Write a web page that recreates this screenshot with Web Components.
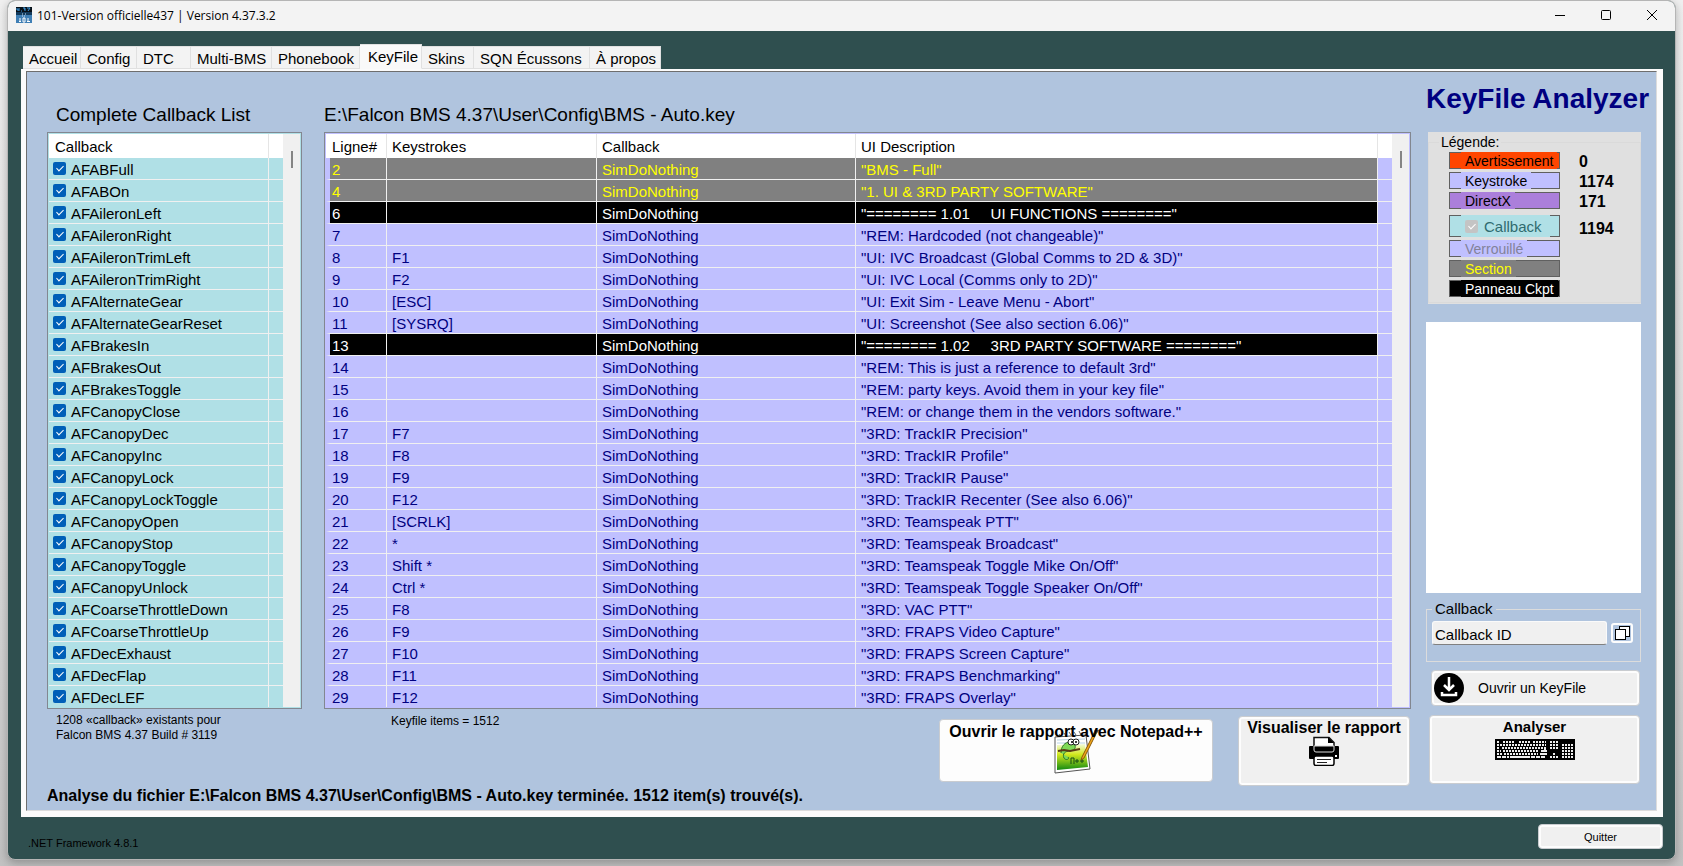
<!DOCTYPE html>
<html lang="fr">
<head>
<meta charset="utf-8">
<title>101-Version officielle437 | Version 4.37.3.2</title>
<style>
html { height: 100%; background: linear-gradient(#f0f0f0, #dcdcdc 60%, #c2c2c2); }
body { margin: 0; min-height: 100%; font-family: "Liberation Sans", Arial, sans-serif; font-size: 15px; color: #000; }
</style>
</head>
<body>
<app-window></app-window>

<script>
const define = (name, html, setup) => {
  const template = document.createElement('template');
  template.innerHTML = `<style>:host,*{box-sizing:border-box}</style>${html}`;
  customElements.define(name, class extends HTMLElement {
    constructor() {
      super();
      this.attachShadow({ mode: 'open' }).append(template.content.cloneNode(true));
    }
    connectedCallback() {
      if (setup && !this.ready) { this.ready = true; setup(this, this.shadowRoot); }
    }
  });
};

const checkCss = `
input[type=checkbox]{appearance:none;margin:0;width:13px;height:13px;flex:none;border-radius:2px;background:var(--check,#005fb8);display:grid;place-items:start center}
input[type=checkbox]::after{content:"";width:3px;height:6px;margin-top:2px;border:solid #fff;border-width:0 1px 1px 0;transform:rotate(45deg)}`;

/* Title bar */
define('title-bar', `
<style>
:host{display:flex;align-items:center;height:30px;background:#f3f3f3;padding:0 0 2px 8px;font:12px "Open Sans","Noto Sans",sans-serif}
.logo{margin-right:5px}
span{flex:1}
button{width:46px;height:28px;border:0;padding:0;background:none;display:grid;place-items:center}
</style>
<svg class="logo" width="16" height="16" viewBox="0 0 16 16">
 <rect width="16" height="16" fill="#123a5c"/><rect width="16" height="5" fill="#071018"/><rect y="8" width="16" height="8" fill="#3f7fb5"/>
 <path d="M1 1v2h2M3 1v3M5 4h1M7 1h2v3M8 2h1M11 1h3l-2 3" stroke="#3d9be0" fill="none"/>
 <path d="M6 7h1M9 7h1M8 9h1M6 9h1" stroke="#cfe4f5"/>
 <path d="M4 11v4M3 14.500h2M7 11h2v4H7zM12 11v4M11 14.500h3" stroke="#fff" fill="none"/>
</svg>
<span><slot></slot></span>
<button aria-label="Réduire"><svg width="10" height="10"><path d="M0 5.500h10" stroke="#000"/></svg></button>
<button aria-label="Agrandir"><svg width="10" height="10"><rect x=".5" y=".5" width="9" height="9" rx="1" fill="none" stroke="#000"/></svg></button>
<button aria-label="Fermer"><svg width="10" height="10"><path d="M0 0l10 10M10 0L0 10" stroke="#000"/></svg></button>
`);

/* Tabs */
define('tab-strip', `
<style>
:host{display:block}
nav{display:flex;align-items:flex-end;padding-left:2px;height:25px}
a{height:23px;padding:0 6px;line-height:23px;background:#f3f3f3;border:1px solid #e0e0e0;border-width:1px 1px 1px 0;color:#000;text-decoration:none;white-space:nowrap}
a[aria-current]{height:25px;background:#f9f9f9;border-bottom-color:#f9f9f9;padding-left:8px}
</style>
<nav></nav>`, (host, root) => {
  const tabs = [['Accueil', 58], ['Config', 56], ['DTC', 54], ['Multi-BMS', 81], ['Phonebook', 88], ['KeyFile', 62], ['Skins', 52], ['SQN Écussons', 116], ['À propos', 71]];
  root.querySelector('nav').innerHTML = tabs.map(([t, w]) =>
    `<a href="#" style="width:${w}px"${t === 'KeyFile' ? ' aria-current="page"' : ''}>${t}</a>`).join('');
});

/* Scrolling frame shared by both tables */
define('list-frame', `
<style>
:host{display:flex;border:1px solid #828790;padding:0}
.in{flex:1;display:flex;min-width:0;border:1px solid var(--row)}
.body{flex:1;min-width:0}
.bar{width:17px;background:#f0f0f0;padding:17px 0 0 8px}
.bar i{display:block;width:2px;height:17px;background:#858585}
</style>
<div class="in"><div class="body"><slot></slot></div><div class="bar"><i></i></div></div>`);

const tableCss = `
:host{display:block}
table{width:100%;table-layout:fixed;border-collapse:separate;border-spacing:0;font-size:15px}
th{height:24px;padding:2px 5px 0;background:#fff;font-weight:normal;text-align:left;border-right:1px solid #e5e5e5;line-height:20px}
th:first-child{padding-left:6px}
th:last-child{border:0}
td{height:22px;padding:2px 4px 0;line-height:19px;background:var(--row);border:solid #f0f0f0;border-width:0 1px 1px 0;white-space:pre;overflow:hidden}
td:last-child{border-right:0}
tr:last-child td{height:21px;border-bottom:0}`;

/* Left list */
define('callback-list', `
<style>${tableCss}${checkCss}
:host{--row:#b0e0e6}
td{padding:0 4px}
label{display:flex;gap:5px;align-items:center;height:20px}
label span{padding-top:2px;line-height:18px}
</style>
<list-frame><table><colgroup><col><col style="width:14px"></colgroup>
<thead><tr><th>Callback</th><th></th></tr></thead><tbody></tbody></table></list-frame>`, (host, root) => {
  const names = 'AFABFull AFABOn AFAileronLeft AFAileronRight AFAileronTrimLeft AFAileronTrimRight AFAlternateGear AFAlternateGearReset AFBrakesIn AFBrakesOut AFBrakesToggle AFCanopyClose AFCanopyDec AFCanopyInc AFCanopyLock AFCanopyLockToggle AFCanopyOpen AFCanopyStop AFCanopyToggle AFCanopyUnlock AFCoarseThrottleDown AFCoarseThrottleUp AFDecExhaust AFDecFlap AFDecLEF'.split(' ');
  root.querySelector('tbody').innerHTML = names.map(n =>
    `<tr><td><label><input type="checkbox" checked><span>${n}</span></label></td><td></td></tr>`).join('');
});

/* Key file table */
define('key-table', `
<style>${tableCss}
:host{--row:#c0c0ff;color:#000080}
th{color:#000}
td:first-child{border-left:4px solid #c0c0ff;padding-left:2px}
td:nth-child(2),td:nth-child(3),td:nth-child(4){padding-left:5px}
.section td:not(:last-child){background:#808080;color:#ff0}
.panel td:not(:last-child){background:#000;color:#fff}
</style>
<list-frame><table><colgroup><col style="width:61px"><col style="width:210px"><col style="width:259px"><col><col style="width:14px"></colgroup>
<thead><tr><th>Ligne#</th><th>Keystrokes</th><th>Callback</th><th>UI Description</th><th></th></tr></thead><tbody></tbody></table></list-frame>`, (host, root) => {
  const rows = [
    [2, '', 'BMS - Full', 'section'],
    [4, '', '1. UI & 3RD PARTY SOFTWARE', 'section'],
    [6, '', '======== 1.01     UI FUNCTIONS ========', 'panel'],
    [7, '', 'REM: Hardcoded (not changeable)'],
    [8, 'F1', 'UI: IVC Broadcast (Global Comms to 2D & 3D)'],
    [9, 'F2', 'UI: IVC Local (Comms only to 2D)'],
    [10, '[ESC]', 'UI: Exit Sim - Leave Menu - Abort'],
    [11, '[SYSRQ]', 'UI: Screenshot (See also section 6.06)'],
    [13, '', '======== 1.02     3RD PARTY SOFTWARE ========', 'panel'],
    [14, '', 'REM: This is just a reference to default 3rd'],
    [15, '', 'REM: party keys. Avoid them in your key file'],
    [16, '', 'REM: or change them in the vendors software.'],
    [17, 'F7', '3RD: TrackIR Precision'],
    [18, 'F8', '3RD: TrackIR Profile'],
    [19, 'F9', '3RD: TrackIR Pause'],
    [20, 'F12', '3RD: TrackIR Recenter (See also 6.06)'],
    [21, '[SCRLK]', '3RD: Teamspeak PTT'],
    [22, '*', '3RD: Teamspeak Broadcast'],
    [23, 'Shift *', '3RD: Teamspeak Toggle Mike On/Off'],
    [24, 'Ctrl *', '3RD: Teamspeak Toggle Speaker On/Off'],
    [25, 'F8', '3RD: VAC PTT'],
    [26, 'F9', '3RD: FRAPS Video Capture'],
    [27, 'F10', '3RD: FRAPS Screen Capture'],
    [28, 'F11', '3RD: FRAPS Benchmarking'],
    [29, 'F12', '3RD: FRAPS Overlay'],
  ];
  root.querySelector('tbody').innerHTML = rows.map(([n, k, d, c]) =>
    `<tr class="${c || ''}"><td>${n}</td><td>${k}</td><td>SimDoNothing</td><td>"${d.replace('&', '&amp;')}"</td><td></td></tr>`).join('');
});

/* Legend */
define('key-legend', `
<style>${checkCss}
:host{display:block;background:#e0e0e0;font-size:14px;padding-bottom:1px}
fieldset{margin:0;border:1px solid #dadada;padding:0 0 5px 20px;min-width:0}
legend{margin-left:-10px;padding:2px 2px 0;line-height:16px;height:20px}
dl{margin:0;display:grid;grid-template-columns:111px 1fr;column-gap:19px;row-gap:3px}
dt{height:17px;border:1px solid #606060;background:var(--c);color:var(--t,#000);padding-left:11px}
dt>span,dt>label{display:inline-flex;align-items:center;height:17px;margin-top:-1px;padding:1px 4px 0;background:var(--c);white-space:nowrap;vertical-align:top}
dd{margin:0;font-weight:bold;font-size:16px;line-height:19px;height:17px}
.big{height:22px;margin-top:3px;font-size:15px}
.big>label{height:22px;padding:0 8px 0 4px;gap:6px}
dd.big{font-size:16px;line-height:28px}
.big input{--check:#c4c4c4}
</style>
<fieldset><legend>Légende:</legend>
<dl>
<dt style="--c:#ff4500"><span>Avertissement</span></dt><dd>0</dd>
<dt style="--c:#c0c0ff"><span>Keystroke</span></dt><dd>1174</dd>
<dt style="--c:#ab7fdb"><span>DirectX</span></dt><dd>171</dd>
<dt class="big" style="--c:#b0e0e6;--t:#2f6b6f"><label><input type="checkbox" checked disabled>Callback</label></dt><dd class="big">1194</dd>
<dt style="--c:#c0c0ff;--t:#82829a"><span>Verrouillé</span></dt><dd></dd>
<dt style="--c:#808080;--t:#ff0"><span>Section</span></dt><dd></dd>
<dt style="--c:#000;--t:#fff"><span>Panneau Ckpt</span></dt><dd></dd>
</dl></fieldset>`);

/* Push button: caption with an optional picture */
define('push-button', `
<style>
:host{display:block}
button{width:100%;height:100%;display:flex;flex-direction:var(--dir,column);align-items:center;justify-content:var(--just,flex-start);gap:var(--gap,0);padding:var(--pad,3px 0 0);font:inherit;line-height:16px;color:#000;white-space:nowrap;background:var(--face,#f0f0f0);border:1px solid #c9ccd0;border-radius:4px;box-shadow:inset 0 0 0 2px #fdfdfd}
</style>
<button><slot></slot></button>`);

/* Callback ID box */
define('callback-box', `
<style>
:host{display:block}
fieldset{margin:0;min-width:0;border:1px solid #dcdcdc;padding:4px 7px 16px 5px;display:flex}
legend{padding:0 3px;line-height:16px;margin-left:0}
.row{display:flex;gap:4px;align-items:center;width:100%}
input{flex:1;min-width:0;height:24px;padding:2px 2px 0;font:inherit;background:#f0f0f0;border:1px solid #fafafa;border-bottom:1px solid #808080;border-radius:3px}
button{width:22px;height:20px;padding:0;background:#b0c4de;border:2px solid #fdfdfd;border-radius:3px;display:grid;place-items:center}
</style>
<fieldset><legend><label for="id">Callback</label></legend>
<div class="row"><input id="id" value="Callback ID">
<button aria-label="Copier"><svg width="15" height="14" viewBox="0 0 15 14"><rect x="4.500" y=".5" width="10" height="10" fill="#fff" stroke="#000"/><rect x=".5" y="3.500" width="10" height="10" fill="#fff" stroke="#000"/></svg></button></div>
</fieldset>`);

/* KeyFile page */
define('keyfile-page', `
<style>
:host{display:flex;background:#b0c4de;border:solid #fbfbfb;border-width:2px 6px 6px 5px;flex:1}
.page{flex:1;min-width:0;border-left:1px solid #6e6e6e;border-top:1px solid #6e6e6e;border-right:1px solid #dcdcdc;border-bottom:1px solid #dcdcdc;padding:1px 15px 0 20px;display:flex;flex-direction:column}
.cols{display:grid;grid-template-columns:255px minmax(0,1fr) 215px;column-gap:0;flex:1}
.mid{margin:0 15px 0 22px}
h2{margin:0;padding:30px 0 5px;font-weight:normal;font-size:19px;line-height:24px;white-space:nowrap}
.left h2{padding-left:9px}
.note{font-size:12px;line-height:15px;margin:0}
.left .note{padding:4px 9px 0}
.under{display:flex;align-items:flex-start;padding:7px 1px 0 0}
.under .note{flex:1;padding-left:67px;margin-top:-2px}
push-button{font-weight:bold}
.np{width:274px;height:63px;margin:3px 25px 0 0;--face:#fdfdfd;--pad:0;font-size:16px}
.stack{display:grid;justify-items:center;width:100%}
.stack>*{grid-area:1/1}
.stack span{padding-top:4px}
.stack svg{margin-top:8px}
.view{width:172px;height:70px;font-size:16px}
.right{display:flex;flex-direction:column;padding-bottom:2px}
h1{margin:0;padding:10px 0 17px;font-size:28px;line-height:32px;color:#000080;white-space:nowrap}
key-legend{margin-left:2px}
textarea{flex:1;min-height:100px;margin:18px 0 8px;border:0;background:#fff;resize:none;width:100%}
.open{margin:8px 1px 9px 5px;height:36px;font-weight:normal;font-size:14px;--dir:row;--gap:14px;--pad:0 2px}
.run{margin:0 1px 0 3px;height:69px;--gap:4px}
.status{margin:0;font-weight:bold;font-size:16px;line-height:20px;padding-bottom:4px}
</style>
<div class="page">
<div class="cols">
 <section class="left"><h2>Complete Callback List</h2><callback-list></callback-list>
  <p class="note">1208 «callback» existants pour<br>Falcon BMS 4.37 Build # 3119</p></section>
 <section class="mid"><h2>E:\\Falcon BMS 4.37\\User\\Config\\BMS - Auto.key</h2><key-table></key-table>
  <div class="under"><p class="note">Keyfile items = 1512</p>
  <push-button class="np"><div class="stack">
   <svg width="46" height="46" viewBox="0 0 46 46">
    <defs><linearGradient id="g" x2="0" y2="1"><stop stop-color="#f4fbe0"/><stop offset=".4" stop-color="#d2e81e"/><stop offset="1" stop-color="#128a12"/></linearGradient></defs>
    <path d="M2 9l31-2 4 34-35 4z" fill="#fff" stroke="#555"/>
    <path d="M4 12l28-1M4 15h28" stroke="#b8d4e6"/>
    <path d="M4 17l28-1 3 23-31 3z" fill="url(#g)"/>
    <path d="M6 6l2 3M11 5l2 3M16 4l2 3M21 4l2 3M26 3l2 4" stroke="#666"/>
    <path d="M8 25C8 18 12 14 17 14l5 3c1 4-1 5-5 6-5 0-8 3-6 7 2 3 6 1 4-1" fill="#7ed957" stroke="#2b7428"/>
    <path d="M5 23l6-1 6 1 10-2" stroke="#5b3a14" stroke-width="2" fill="none"/>
    <circle cx="18" cy="14" r="3" fill="#fff" stroke="#222"/><circle cx="23" cy="14" r="3" fill="#fff" stroke="#222"/><circle cx="19" cy="14" r="1"/><circle cx="23" cy="14" r="1"/>
    <path d="M18 36v-6h3v6M22 33h4M24 31v4M27 33h4M29 31v4" stroke="#174c17" fill="none"/>
    <path d="M42 3l2 1-13 26-3 2 1-3z" fill="#f3a71b" stroke="#8a5a08"/><path d="M41 3l3 2 2-3-3-1z" fill="#444"/>
   </svg><span>Ouvrir le rapport avec Notepad++</span></div></push-button>
  <push-button class="view"><span>Visualiser le rapport</span>
   <svg width="30" height="30" viewBox="0 0 30 30"><path d="M5 12V1.500h15l5 5V12" fill="#fff" stroke="#111" stroke-width="1.500"/><path d="M19 1v6h6z"/>
   <rect y="10" width="30" height="13" rx="1"/><path d="M5 10h20v4q0 2-2 2H7q-2 0-2-2z" fill="#000" stroke="#ddd"/><rect x="26" y="19" width="2" height="2" fill="#fff"/>
   <rect x="5" y="20" width="20" height="9.500" rx="2" fill="#fff" stroke="#000" stroke-width="1.500"/><path d="M8 23.500h14M8 26.500h10" stroke="#222"/></svg></push-button></div>
 </section>
 <section class="right"><h1>KeyFile Analyzer</h1><key-legend></key-legend>
  <textarea aria-label="Détails" readonly></textarea>
  <callback-box></callback-box>
  <push-button class="open"><svg width="30" height="30" viewBox="0 0 30 30"><circle cx="15" cy="15" r="15"/><path d="M15 4v12M10 12l5 5 5-5M8 19v3h14v-3" fill="none" stroke="#fff" stroke-width="2.500"/></svg><span>Ouvrir un KeyFile</span></push-button>
  <push-button class="run"><span>Analyser</span>
   <svg width="80" height="21" viewBox="0 0 80 21"><rect width="80" height="21"/>
   <g stroke="#eee" stroke-width="2" fill="none">
    <path d="M2 3h2M8 3h11M24 3h11M38 3h13" stroke-dasharray="2 1"/>
    <path d="M2 6h49" stroke-dasharray="2 1"/><path d="M2 9h3M7 9h41" stroke-dasharray="2 1"/><path d="M2 12h4M8 12h36" stroke-dasharray="2 1"/><path d="M2 15h5M9 15h34" stroke-dasharray="2 1"/>
    <path d="M2 18h12M36 18h15" stroke-dasharray="4 1"/><path d="M15 18h20M46 12h6M45 15h7M50 8v5"/>
    <path d="M55 3h8M55 6h8M55 9h8M58 15h2M55 18h8" stroke-dasharray="2 1"/>
    <path d="M67 6h11M67 9h11M67 12h11M67 15h11M67 18h11" stroke-dasharray="2 1"/>
   </g></svg></push-button>
 </section>
</div>
<p class="status">Analyse du fichier E:\\Falcon BMS 4.37\\User\\Config\\BMS - Auto.key terminée. 1512 item(s) trouvé(s).</p>
</div>`);

/* Main window */
define('app-window', `
<style>
:host{display:flex;flex-direction:column;min-height:100vh;padding:0 7px 8px 7px}
.win{flex:1;display:flex;flex-direction:column;border:1px solid #b5b5b5;border-radius:8px;overflow:hidden;background:#2f4f4f;box-shadow:0 3px 10px #0004}
main{flex:1;display:flex;flex-direction:column;padding:13px 12px 0 13px}
footer{display:flex;justify-content:space-between;align-items:flex-start;padding:7px 0 9px 7px;font-size:11px}
footer span{padding-top:12px;line-height:14px}
push-button{width:125px;height:25px;--just:center;--pad:0}
</style>
<div class="win">
<title-bar>101-Version officielle437 | Version 4.37.3.2</title-bar>
<main><tab-strip></tab-strip><keyfile-page></keyfile-page>
<footer><span>.NET Framework 4.8.1</span><push-button>Quitter</push-button></footer></main>
</div>`);
</script>
</body>
</html>
